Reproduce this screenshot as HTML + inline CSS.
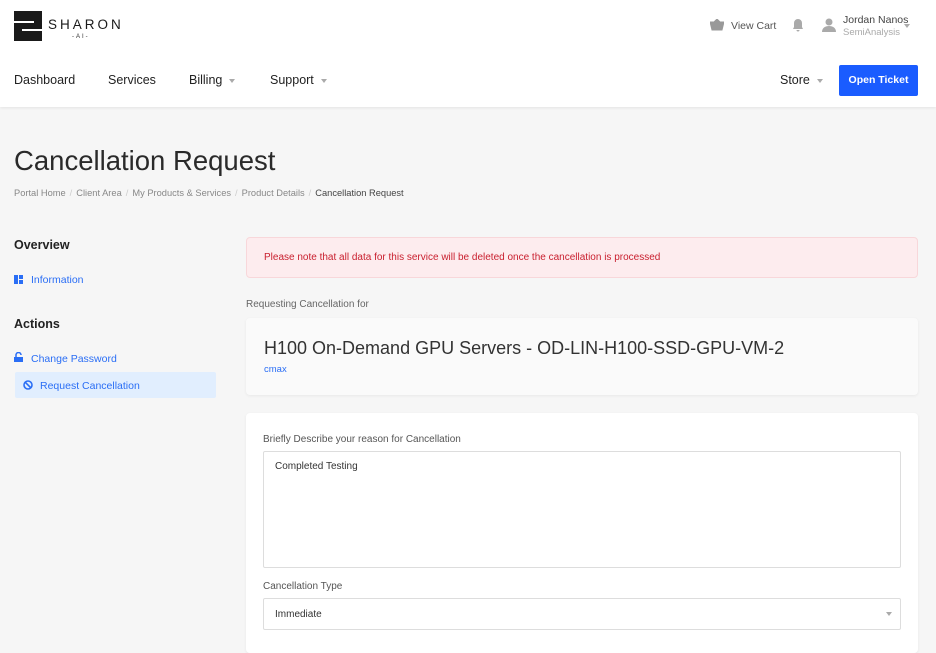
<!DOCTYPE html>
<html><head><style>
*{box-sizing:border-box;margin:0;padding:0}
body{width:936px;height:646px;overflow:hidden;background:#f6f6f6;font-family:"Liberation Sans",Arial,sans-serif;color:#222;position:relative}
.abs{position:absolute}
header{position:absolute;left:0;top:0;width:936px;height:107px;background:#fff;box-shadow:0 1px 3px rgba(0,0,0,.08)}
.nav{font-size:12.5px;color:#222;top:73px}
.caret{display:inline-block;width:0;height:0;border-left:3px solid transparent;border-right:3px solid transparent;border-top:4px solid #aaa;margin-left:7px;vertical-align:middle}
.btn{left:839px;top:65px;width:79px;height:31px;background:#1a5cff;color:#fff;font-size:10.5px;font-weight:bold;border-radius:2px;text-align:center;line-height:31px}
h1{position:absolute;left:14px;top:145px;font-size:27.5px;font-weight:normal;color:#2a2a2a}
.bc{left:14px;top:188px;font-size:9.3px;color:#888}
.bc b{font-weight:normal;color:#ccc;margin:0 4px}
.side{font-size:12.5px;font-weight:bold;color:#222}
.link{font-size:10.5px;color:#2a6ef5}
.card{background:#fff;border-radius:4px;box-shadow:0 1px 3px rgba(0,0,0,.06)}
</style></head><body>
<header>
<div class="abs" style="left:14px;top:11px;width:28px;height:30px">
<div class="abs" style="left:0;top:0;width:28px;height:30px;background:#1a1a1a"></div>
<div class="abs" style="left:0;top:10px;width:20px;height:2px;background:#fff"></div>
<div class="abs" style="left:8px;top:18px;width:20px;height:2px;background:#fff"></div>
</div>
<div class="abs" style="left:48px;top:17px;font-size:13.5px;letter-spacing:3px;color:#1a1a1a">SHARON</div>
<div class="abs" style="left:72px;top:34px;font-size:6px;letter-spacing:2px;color:#333">-AI-</div>
<svg class="abs" style="left:710px;top:19px" width="14" height="12" viewBox="0 0 14 12"><path d="M0 3h14l-2 8H2z M4 3l3-3 3 3" fill="#999" stroke="#999"/></svg>
<div class="abs" style="left:731px;top:20px;font-size:10.5px;color:#555">View Cart</div>
<svg class="abs" style="left:792px;top:18px" width="12" height="14" viewBox="0 0 12 14"><path d="M6 1a4 4 0 0 0-4 4v4L1 11h10L10 9V5a4 4 0 0 0-4-4zM4.5 12a1.5 1.5 0 0 0 3 0z" fill="#aaa"/></svg>
<svg class="abs" style="left:822px;top:18px" width="14" height="14" viewBox="0 0 14 14"><circle cx="7" cy="4" r="3.5" fill="#aaa"/><path d="M0 14c0-4 3-6 7-6s7 2 7 6z" fill="#aaa"/></svg>
<div class="abs" style="left:843px;top:14px;font-size:10.5px;color:#444">Jordan Nanos</div>
<div class="abs" style="left:843px;top:27px;font-size:9.5px;color:#aaa">SemiAnalysis</div>
<span class="caret abs" style="left:904px;top:24px;margin:0"></span>
<div class="abs nav" style="left:14px">Dashboard</div>
<div class="abs nav" style="left:108px">Services</div>
<div class="abs nav" style="left:189px">Billing<span class="caret"></span></div>
<div class="abs nav" style="left:270px">Support<span class="caret"></span></div>
<div class="abs nav" style="left:780px">Store<span class="caret"></span></div>
<div class="abs btn">Open Ticket</div>
</header>
<h1>Cancellation Request</h1>
<div class="abs bc">Portal Home<b>/</b>Client Area<b>/</b>My Products &amp; Services<b>/</b>Product Details<b>/</b><span style="color:#444">Cancellation Request</span></div>
<div class="abs side" style="left:14px;top:238px">Overview</div>
<svg class="abs" style="left:14px;top:275px" width="9" height="9"><rect x="0" y="0" width="4" height="9" fill="#2a6ef5"/><rect x="5" y="0" width="4" height="4" fill="#2a6ef5"/><rect x="5" y="5" width="4" height="4" fill="#2a6ef5"/></svg>
<div class="abs link" style="left:31px;top:274px">Information</div>
<div class="abs side" style="left:14px;top:317px">Actions</div>
<svg class="abs" style="left:14px;top:352px" width="9" height="10"><path d="M2 5V3a2.5 2.5 0 0 1 5 0" fill="none" stroke="#2a6ef5" stroke-width="1.5"/><rect x="0" y="5" width="9" height="5" fill="#2a6ef5"/></svg>
<div class="abs link" style="left:31px;top:353px">Change Password</div>
<div class="abs" style="left:15px;top:372px;width:201px;height:26px;background:#e1eefe;border-radius:2px"></div>
<svg class="abs" style="left:23px;top:380px" width="10" height="10"><circle cx="5" cy="5" r="4" fill="none" stroke="#2a6ef5" stroke-width="1.6"/><path d="M2.2 2.2l5.6 5.6" stroke="#2a6ef5" stroke-width="1.6"/></svg>
<div class="abs link" style="left:40px;top:380px">Request Cancellation</div>
<div class="abs" style="left:246px;top:237px;width:672px;height:41px;background:#fdecee;border:1px solid #f8d7da;border-radius:4px"></div>
<div class="abs" style="left:264px;top:252px;font-size:10px;color:#c9202f">Please note that all data for this service will be deleted once the cancellation is processed</div>
<div class="abs" style="left:246px;top:299px;font-size:10px;color:#666">Requesting Cancellation for</div>
<div class="abs card" style="left:246px;top:318px;width:672px;height:77px;background:#fafafa"></div>
<div class="abs" style="left:264px;top:338px;font-size:18px;color:#333">H100 On-Demand GPU Servers - OD-LIN-H100-SSD-GPU-VM-2</div>
<div class="abs link" style="left:264px;top:364px;font-size:9.5px">cmax</div>
<div class="abs card" style="left:246px;top:413px;width:672px;height:240px"></div>
<div class="abs" style="left:263px;top:434px;font-size:10px;color:#555">Briefly Describe your reason for Cancellation</div>
<div class="abs" style="left:263px;top:451px;width:638px;height:117px;border:1px solid #ddd;border-radius:2px;background:#fff"></div>
<div class="abs" style="left:275px;top:461px;font-size:10px;color:#333">Completed Testing</div>
<div class="abs" style="left:263px;top:581px;font-size:10px;color:#555">Cancellation Type</div>
<div class="abs" style="left:263px;top:598px;width:638px;height:32px;border:1px solid #ddd;border-radius:2px;background:#fff"></div>
<div class="abs" style="left:275px;top:609px;font-size:10px;color:#333">Immediate</div>
<span class="caret abs" style="left:886px;top:612px;margin:0"></span>
</body></html>
